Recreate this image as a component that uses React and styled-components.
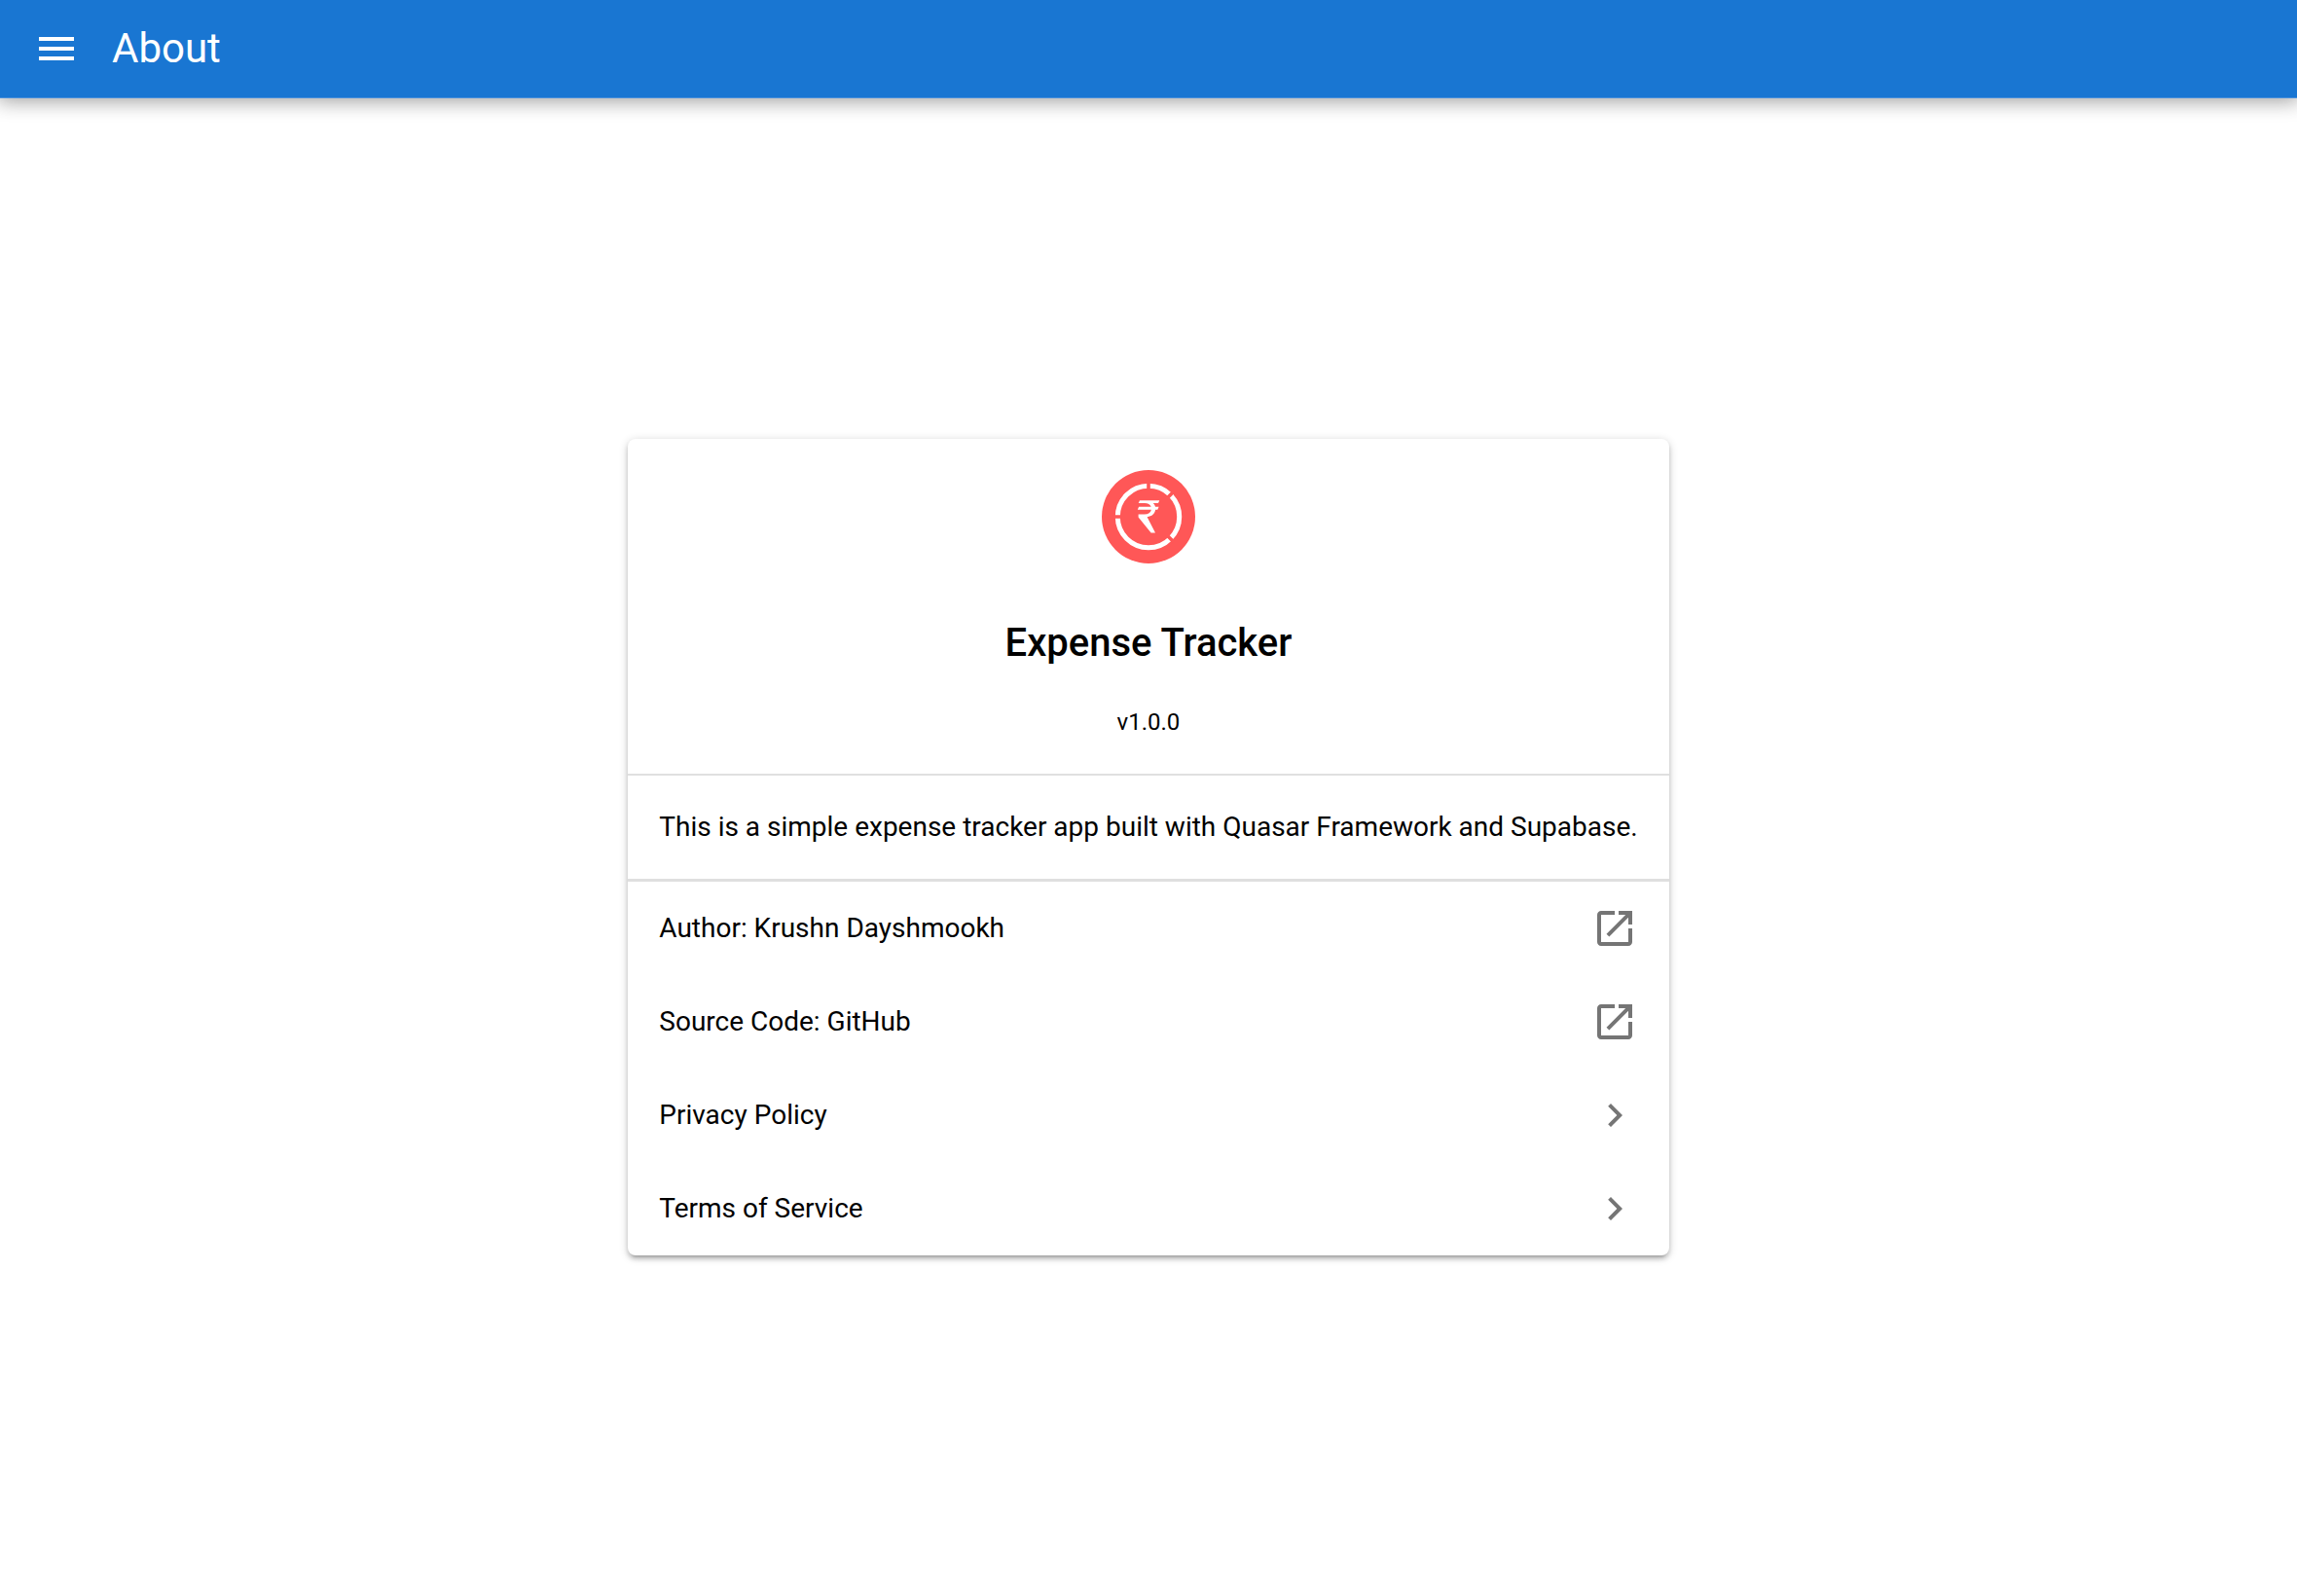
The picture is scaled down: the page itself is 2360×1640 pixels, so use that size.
import React from "react";
import styled, { createGlobalStyle } from "styled-components";

const GlobalStyle = createGlobalStyle`
  *, *::before, *::after { box-sizing: border-box; }
  body {
    margin: 0;
    background: #fff;
    color: #000;
    font-family: Roboto, "Liberation Sans", sans-serif;
    font-size: 28px;
    line-height: 42px;
  }
`;

const Layout = styled.div`
  display: flex;
  flex-direction: column;
  min-height: 100vh;
`;

const Toolbar = styled.header`
  display: flex;
  align-items: center;
  height: 101px;
  padding: 0 24px;
  color: #fff;
  background: #1976d2;
  border-bottom: 1px solid #478fdb;
  box-shadow: 0 0 20px 4px rgba(0, 0, 0, 0.2), 0 0 20px rgba(0, 0, 0, 0.24);
`;

const MenuButton = styled.button`
  display: flex;
  align-items: center;
  justify-content: center;
  width: 67px;
  height: 67px;
  padding: 0;
  border: 0;
  border-radius: 50%;
  color: inherit;
  background: none;
  cursor: pointer;
`;

const PageTitle = styled.h1`
  margin: 0;
  padding: 0 24px;
  font-size: 42px;
  font-weight: 400;
  line-height: 64px;
`;

const Page = styled.main`
  display: flex;
  flex: 1;
  align-items: center;
  justify-content: center;
`;

const Card = styled.article`
  border-radius: 8px;
  background: #fff;
  box-shadow: 0 2px 10px rgba(0, 0, 0, 0.2), 0 4px 4px rgba(0, 0, 0, 0.14),
    0 6px 2px -4px rgba(0, 0, 0, 0.12);
`;

const Section = styled.section`
  padding: 32px;
`;

const Intro = styled(Section)`
  display: flex;
  flex-direction: column;
  align-items: center;
  border-bottom: 2px solid #e0e0e0;
`;

const AppName = styled.h2`
  margin: 50px 0 28px;
  font-size: 40px;
  font-weight: 500;
  line-height: 64px;
`;

const Version = styled.span`
  font-size: 24px;
  line-height: 42px;
`;

const Description = styled.p`
  margin: 0;
`;

const LinkList = styled.nav`
  display: flex;
  flex-direction: column;
  border-top: 3px solid #dfdfdf;
`;

const LinkRow = styled.a`
  display: flex;
  align-items: center;
  justify-content: space-between;
  min-height: 96px;
  padding: 0 32px;
  color: inherit;
  text-decoration: none;
`;

const Glyph = styled.svg`
  flex: none;
  width: 48px;
  height: 48px;
  fill: ${(p) => p.$color || "currentColor"};
`;

const LogoImage = styled.svg`
  width: 96px;
  height: 96px;
`;

const PATHS = {
  menu: "M3 18h18v-2H3v2zm0-5h18v-2H3v2zm0-7v2h18V6H3z",
  external:
    "M19 19H5V5h7V3H5c-1.11 0-2 .9-2 2v14c0 1.1.89 2 2 2h14c1.1 0 2-.9 2-2v-7h-2v7zM14 3v2h3.59l-9.83 9.83 1.41 1.41L19 6.41V10h2V3h-7z",
  chevron: "M10 6L8.59 7.41 13.17 12l-4.58 4.59L10 18l6-6z",
};

function Icon({ name, color }) {
  return (
    <Glyph viewBox="0 0 24 24" $color={color} aria-hidden="true">
      <path d={PATHS[name]} />
    </Glyph>
  );
}

function Logo() {
  return (
    <LogoImage viewBox="0 0 96 96" role="img" aria-label="Expense Tracker logo">
      <circle cx="48" cy="48" r="48" fill="#ff5757" />
      <circle cx="48" cy="48" r="31.7" fill="none" stroke="#fff" strokeWidth="5" />
      <path
        d="M48 48V10M48 48H10M48 48L74 22M48 48L74 74"
        stroke="#ff5757"
        strokeWidth="3.6"
      />
      <circle cx="48" cy="48" r="28" fill="#ff5757" />
      <path
        fill="#fff"
        d="M39 31.2H59.3L58 34H52.6C53.9 35.1 54.7 36.4 55 37.8H58.6L57.3 40.8H55.1C54.5 45 51.6 47.6 46.6 48.2L55 64.6H50.6L37.6 48.5V45.6H43.8C47.8 45.6 50.3 44 50.9 40.8H36.8L38.1 37.8H50.7C49.8 35.3 47.6 34 44 34H37.7Z"
      />
    </LogoImage>
  );
}

const LINKS = [
  { label: "Author: Krushn Dayshmookh", icon: "external" },
  { label: "Source Code: GitHub", icon: "external" },
  { label: "Privacy Policy", icon: "chevron" },
  { label: "Terms of Service", icon: "chevron" },
];

export default function App() {
  return (
    <Layout>
      <GlobalStyle />
      <Toolbar>
        <MenuButton type="button" aria-label="Menu">
          <Icon name="menu" />
        </MenuButton>
        <PageTitle>About</PageTitle>
      </Toolbar>
      <Page>
        <Card>
          <Intro>
            <Logo />
            <AppName>Expense Tracker</AppName>
            <Version>v1.0.0</Version>
          </Intro>
          <Section>
            <Description>
              This is a simple expense tracker app built with Quasar Framework and Supabase.
            </Description>
          </Section>
          <LinkList>
            {LINKS.map((link) => (
              <LinkRow key={link.label} href="#">
                {link.label}
                <Icon name={link.icon} color="#757575" />
              </LinkRow>
            ))}
          </LinkList>
        </Card>
      </Page>
    </Layout>
  );
}
